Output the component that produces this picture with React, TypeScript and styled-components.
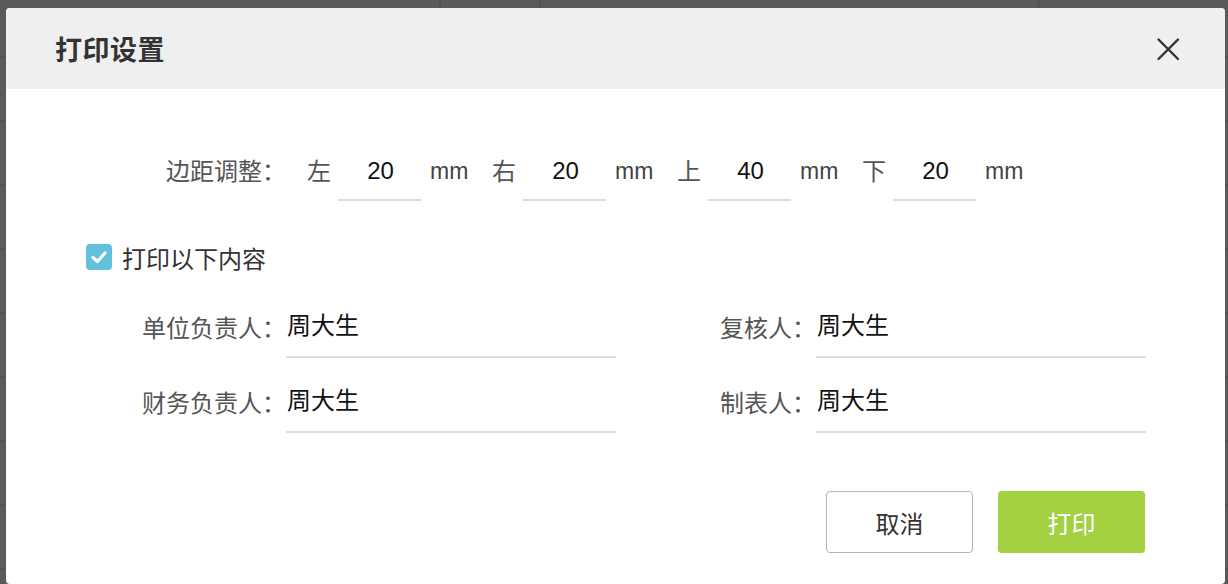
import React, { useState } from 'react';
import styled, { createGlobalStyle } from 'styled-components';

const GlobalStyle = createGlobalStyle`
  html, body {
    margin: 0;
    padding: 0;
    background: #5a5a5a;
  }
  body {
    font-family: 'Liberation Sans', 'Noto Sans CJK SC', sans-serif;
  }
  * {
    box-sizing: border-box;
  }
`;

const Backdrop = styled.div`
  width: 1228px;
  height: 584px;
  padding: 8px 3px 0 6px;
  background-color: #5a5a5a;
  background-image:
    linear-gradient(to right, transparent 439px, #525252 439px, #525252 441px, transparent 441px),
    linear-gradient(to right, transparent 539px, #525252 539px, #525252 541px, transparent 541px),
    linear-gradient(to right, transparent 1038px, #525252 1038px, #525252 1040px, transparent 1040px),
    repeating-linear-gradient(to bottom, transparent 0, transparent 56px, #525252 56px, #525252 58px, transparent 58px, transparent 64px);
  overflow: hidden;
`;

const Dialog = styled.div`
  width: 1219px;
  height: 576px;
  background: #fff;
  border-radius: 4px;
  overflow: hidden;
  display: flex;
  flex-direction: column;
`;

const Header = styled.div`
  height: 81px;
  flex-shrink: 0;
  background: #efefef;
  display: flex;
  align-items: center;
  justify-content: space-between;
  padding: 0 44px 0 49px;
`;

const Title = styled.h2`
  margin: 0;
  font-size: 27px;
  font-weight: 700;
  color: #333;
  letter-spacing: 0.5px;
`;

const CloseButton = styled.button`
  width: 26px;
  height: 26px;
  padding: 0;
  border: none;
  background: transparent;
  display: flex;
  align-items: center;
  justify-content: center;
  cursor: pointer;
  color: #333;
`;

const Body = styled.div`
  padding: 50px 0 0 0;
  display: flex;
  flex-direction: column;
`;

const MarginRow = styled.div`
  display: flex;
  align-items: center;
  padding-left: 160px;
`;

const RowLabel = styled.span`
  font-size: 24px;
  color: #555;
  width: 141px;
  white-space: nowrap;
  padding-bottom: 2px;
`;

const Side = styled.span`
  font-size: 24px;
  color: #555;
  width: 24px;
  margin-right: 7px;
  padding-bottom: 2px;
`;

const NumberInput = styled.input`
  width: 83px;
  height: 62px;
  border: none;
  border-bottom: 2px solid #dcdcdc;
  outline: none;
  text-align: center;
  font-family: 'Liberation Sans', sans-serif;
  font-size: 24px;
  color: #111;
  background: transparent;
  padding: 3px 0 0 2px;
`;

const Unit = styled.span`
  font-family: 'Liberation Sans', sans-serif;
  font-size: 23px;
  color: #444;
  width: 40px;
  margin-left: 9px;
  margin-right: 22px;
  padding-top: 2px;
`;

const CheckRow = styled.label`
  display: flex;
  align-items: center;
  gap: 10px;
  margin: 41px 0 0 80px;
  font-size: 24px;
  color: #333;
  cursor: pointer;
  height: 30px;
`;

const CheckBox = styled.span<{ $checked: boolean }>`
  width: 26px;
  height: 26px;
  border-radius: 4px;
  background: ${({ $checked }) => ($checked ? '#62c2dd' : '#fff')};
  border: ${({ $checked }) => ($checked ? 'none' : '1px solid #bbb')};
  display: flex;
  align-items: center;
  justify-content: center;
`;

const FieldGrid = styled.div`
  display: grid;
  grid-template-columns: 480px 480px;
  column-gap: 50px;
  row-gap: 11px;
  margin: 22px 0 0 130px;
`;

const Field = styled.div`
  display: flex;
  align-items: center;
`;

const FieldLabel = styled.span`
  width: 150px;
  text-align: right;
  font-size: 24px;
  color: #555;
  white-space: nowrap;
`;

const TextInput = styled.input`
  width: 330px;
  height: 64px;
  border: none;
  border-bottom: 2px solid #dcdcdc;
  outline: none;
  font-family: 'Liberation Sans', 'Noto Sans CJK SC', sans-serif;
  font-size: 24px;
  color: #111;
  background: transparent;
  padding: 0 0 4px 1px;
`;

const Footer = styled.div`
  display: flex;
  justify-content: flex-end;
  gap: 25px;
  padding-right: 80px;
  margin-top: 58px;
`;

const Button = styled.button<{ $primary?: boolean }>`
  width: 147px;
  height: 62px;
  border-radius: 4px;
  font-family: 'Liberation Sans', 'Noto Sans CJK SC', sans-serif;
  font-size: 24px;
  cursor: pointer;
  border: ${({ $primary }) => ($primary ? 'none' : '1.5px solid #b5b5b5')};
  background: ${({ $primary }) => ($primary ? '#a3d141' : '#fff')};
  color: ${({ $primary }) => ($primary ? '#fff' : '#333')};
`;

const margins = [
  { side: '左', value: '20' },
  { side: '右', value: '20' },
  { side: '上', value: '40' },
  { side: '下', value: '20' },
];

const fields = [
  { label: '单位负责人：', value: '周大生' },
  { label: '复核人：', value: '周大生' },
  { label: '财务负责人：', value: '周大生' },
  { label: '制表人：', value: '周大生' },
];

const App: React.FC = () => {
  const [checked, setChecked] = useState(true);

  return (
    <>
      <GlobalStyle />
      <Backdrop>
        <Dialog>
          <Header>
            <Title>打印设置</Title>
            <CloseButton type="button" aria-label="关闭">
              <svg width="24" height="24" viewBox="0 0 24 24">
                <path d="M2.5 2.5 L22 22 M22 2.5 L2.5 22" stroke="#333" strokeWidth="2.4" strokeLinecap="round" />
              </svg>
            </CloseButton>
          </Header>
          <Body>
            <MarginRow>
              <RowLabel>边距调整：</RowLabel>
              {margins.map((m) => (
                <React.Fragment key={m.side}>
                  <Side>{m.side}</Side>
                  <NumberInput defaultValue={m.value} />
                  <Unit>mm</Unit>
                </React.Fragment>
              ))}
            </MarginRow>
            <CheckRow onClick={() => setChecked(!checked)}>
              <CheckBox $checked={checked}>
                {checked && (
                  <svg width="22" height="22" viewBox="0 0 22 22">
                    <path d="M5 11.5 L9.5 15.5 L17 7" fill="none" stroke="#fff" strokeWidth="3.2" strokeLinecap="round" strokeLinejoin="round" />
                  </svg>
                )}
              </CheckBox>
              打印以下内容
            </CheckRow>
            <FieldGrid>
              {fields.map((f) => (
                <Field key={f.label}>
                  <FieldLabel>{f.label}</FieldLabel>
                  <TextInput defaultValue={f.value} />
                </Field>
              ))}
            </FieldGrid>
            <Footer>
              <Button type="button">取消</Button>
              <Button type="button" $primary>
                打印
              </Button>
            </Footer>
          </Body>
        </Dialog>
      </Backdrop>
    </>
  );
};

export default App;
